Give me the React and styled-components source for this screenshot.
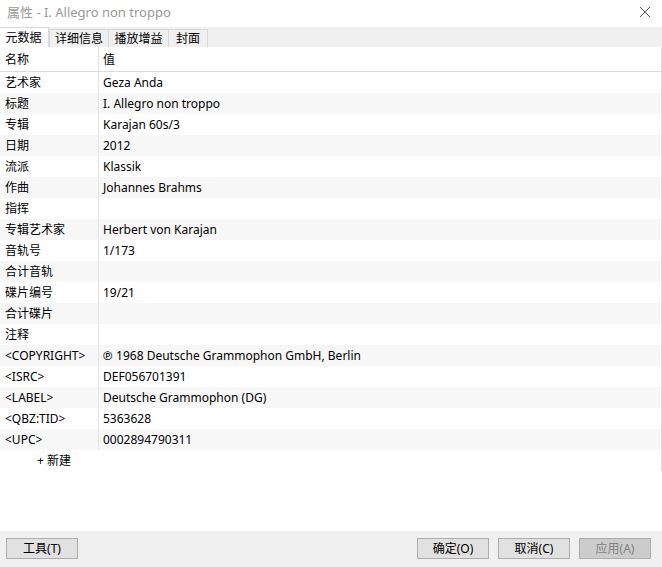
import React from "react";
import styled, { createGlobalStyle } from "styled-components";

const Global = createGlobalStyle`
  html, body { margin: 0; padding: 0; background: #fff; }
  body { font-family: "Noto Sans", "Noto Sans CJK SC", sans-serif; font-size: 12px; color: #000; }
  #root { width: 662px; height: 567px; }
`;

const Window = styled.div`
  width: 662px;
  height: 567px;
  display: flex;
  flex-direction: column;
  background: #fff;
  overflow: hidden;
`;

const TitleBar = styled.div`
  height: 27px;
  flex: none;
  display: flex;
  align-items: center;
  justify-content: space-between;
  padding: 0 8px 0 7px;
`;

const Title = styled.div`
  color: #9a9a9a;
  font-size: 13px;
  line-height: 1;
  margin-top: -2px;
`;

const Close = styled.div`
  width: 12px;
  height: 12px;
  margin-top: -5px;
  margin-right: 3px;
`;

const TabStrip = styled.div`
  height: 20px;
  flex: none;
  background: #f0f0f0;
  display: flex;
  align-items: flex-end;
`;

const Tab = styled.div`
  width: ${p => p.$w}px;
  height: ${p => (p.$active ? "20px" : "18px")};
  box-sizing: border-box;
  display: flex;
  align-items: center;
  justify-content: center;
  padding-top: 1px;
  background: ${p => (p.$active ? "#fff" : "#f0f0f0")};
  border: 1px solid #d9d9d9;
  border-bottom: none;
  border-left: ${p => (p.$first ? "none" : "1px solid #d9d9d9")};
  margin-left: ${p => (p.$after ? "0" : "-1px")};
  font-size: 12px;
  line-height: 1;
`;

const ListArea = styled.div`
  height: 424px;
  flex: none;
  border-right: 1px solid #dcdcdc;
  width: 661px;
  display: flex;
  flex-direction: column;
`;

const HeaderRow = styled.div`
  height: 25px;
  flex: none;
  display: grid;
  grid-template-columns: 99px 1fr;
  border-bottom: 1px solid #dcdcdc;
  box-sizing: border-box;
`;

const Row = styled.div`
  height: 21px;
  flex: none;
  display: grid;
  grid-template-columns: 99px 1fr;
  background: ${p => (p.$alt ? "#f7f7f7" : "#fff")};
`;

const Cell = styled.div`
  display: flex;
  align-items: center;
  padding-left: ${p => (p.$value ? "4px" : "5px")};
  border-right: ${p => (p.$value ? "none" : "1px solid #e4e4e4")};
  white-space: nowrap;
  overflow: hidden;
  line-height: 1;
  padding-top: 0px;
`;

const HeadCell = styled(Cell)`
  padding-top: 1px;
`;

const AddRow = styled.div`
  height: 21px;
  flex: none;
  display: flex;
  align-items: center;
  padding-left: 37px;
  padding-top: 0;
  line-height: 1;
`;

const Spacer = styled.div`
  flex: 1;
`;

const BottomBar = styled.div`
  height: 36px;
  flex: none;
  background: #f0f0f0;
  display: flex;
  align-items: flex-start;
  padding: 7px 11px 0 6px;
  box-sizing: border-box;
  gap: 9px;
`;

const Button = styled.div`
  width: 72px;
  height: 21px;
  box-sizing: border-box;
  border: 1px solid #adadad;
  background: ${p => (p.$disabled ? "#cccccc" : "#e1e1e1")};
  color: ${p => (p.$disabled ? "#838383" : "#000")};
  display: flex;
  align-items: center;
  justify-content: center;
  font-size: 12px;
  line-height: 1;
  padding-top: 1px;
  margin-left: ${p => (p.$push ? "auto" : "0")};
`;

const rows = [
  ["艺术家", "Geza Anda"],
  ["标题", "I. Allegro non troppo"],
  ["专辑", "Karajan 60s/3"],
  ["日期", "2012"],
  ["流派", "Klassik"],
  ["作曲", "Johannes Brahms"],
  ["指挥", ""],
  ["专辑艺术家", "Herbert von Karajan"],
  ["音轨号", "1/173"],
  ["合计音轨", ""],
  ["碟片编号", "19/21"],
  ["合计碟片", ""],
  ["注释", ""],
  ["<COPYRIGHT>", "℗ 1968 Deutsche Grammophon GmbH, Berlin"],
  ["<ISRC>", "DEF056701391"],
  ["<LABEL>", "Deutsche Grammophon (DG)"],
  ["<QBZ:TID>", "5363628"],
  ["<UPC>", "0002894790311"],
];

export default function App() {
  return (
    <Window>
      <Global />
      <TitleBar>
        <Title>属性 - I. Allegro non troppo</Title>
        <Close>
          <svg width="12" height="12" viewBox="0 0 12 12">
            <path d="M1 1 L11 11 M11 1 L1 11" stroke="#555" strokeWidth="1" fill="none" />
          </svg>
        </Close>
      </TitleBar>
      <TabStrip>
        <Tab $active $first $w={50}>元数据</Tab>
        <Tab $after $w={60}>详细信息</Tab>
        <Tab $w={61}>播放增益</Tab>
        <Tab $w={40}>封面</Tab>
      </TabStrip>
      <ListArea>
        <HeaderRow>
          <HeadCell>名称</HeadCell>
          <HeadCell $value>值</HeadCell>
        </HeaderRow>
        {rows.map(([k, v], i) => (
          <Row key={k} $alt={i % 2 === 1}>
            <Cell>{k}</Cell>
            <Cell $value>{v}</Cell>
          </Row>
        ))}
        <AddRow>+ 新建</AddRow>
      </ListArea>
      <Spacer />
      <BottomBar>
        <Button>工具(T)</Button>
        <Button $push>确定(O)</Button>
        <Button>取消(C)</Button>
        <Button $disabled>应用(A)</Button>
      </BottomBar>
    </Window>
  );
}
